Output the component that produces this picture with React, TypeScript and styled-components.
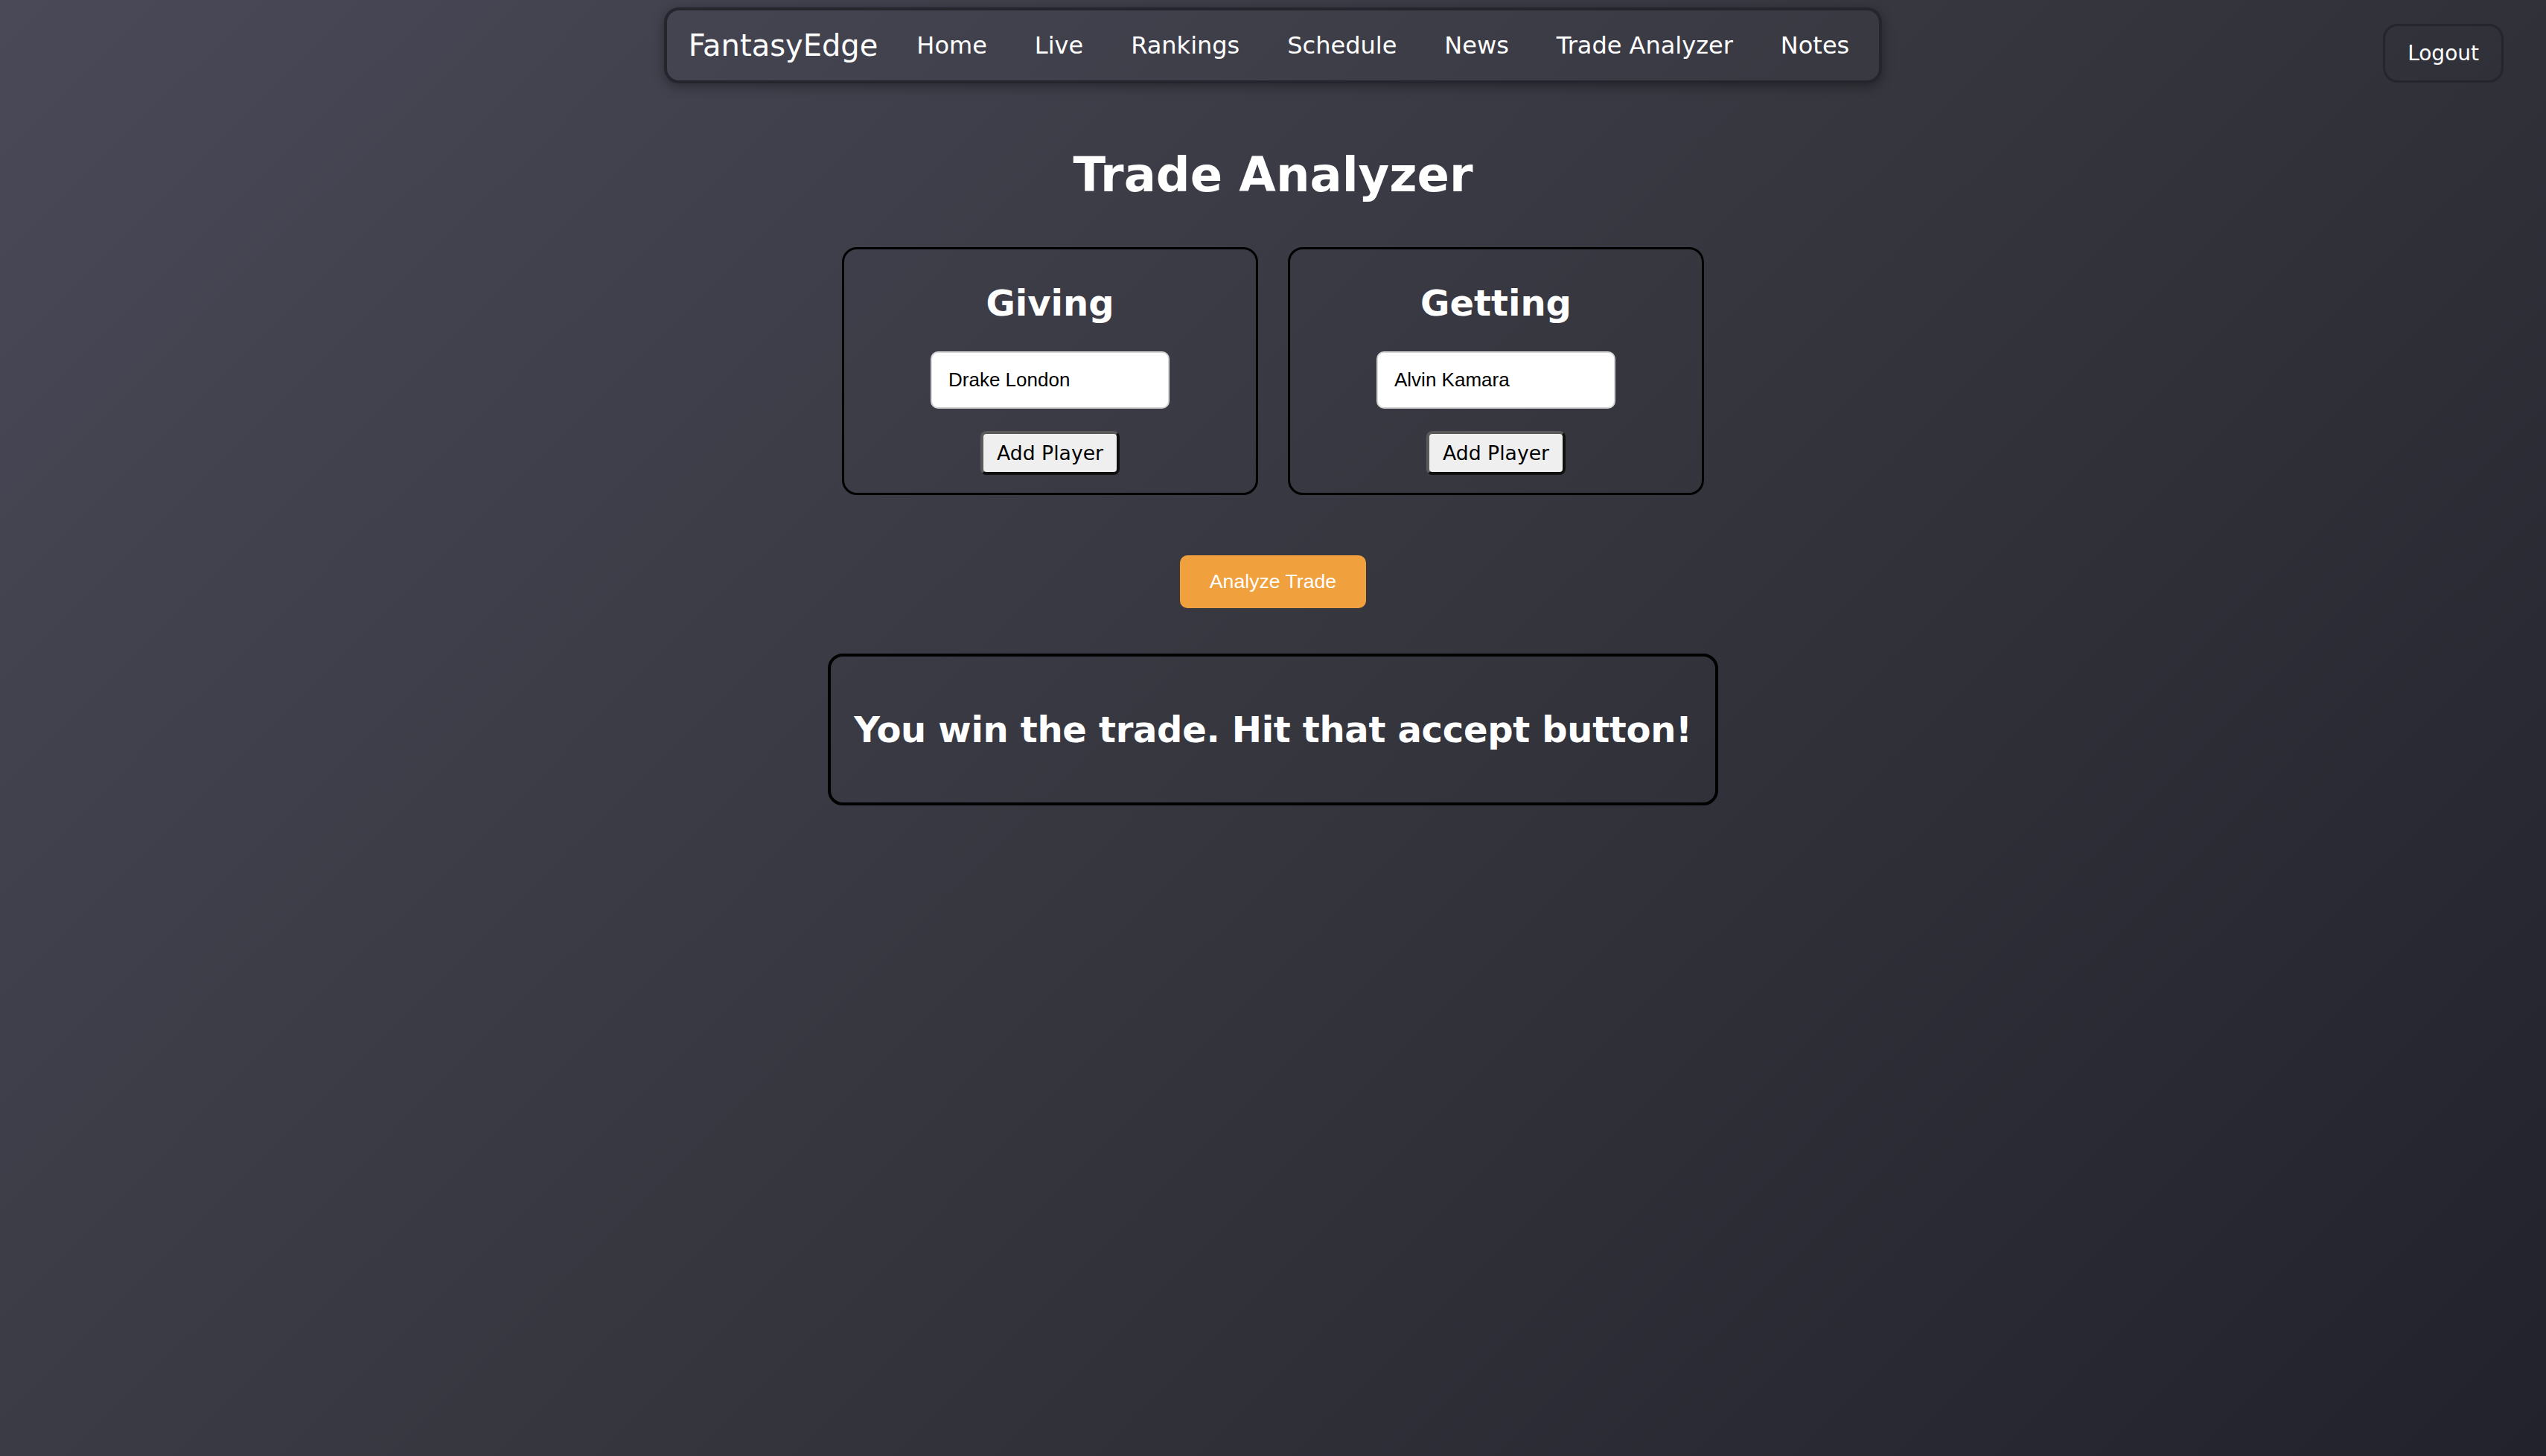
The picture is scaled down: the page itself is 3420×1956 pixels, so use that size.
import React, { useState } from "react";
import styled, { createGlobalStyle } from "styled-components";

const GlobalStyle = createGlobalStyle`
  html, body {
    margin: 0;
    padding: 0;
    min-height: 100%;
  }
  body {
    font-family: Verdana, "DejaVu Sans", sans-serif;
    color: #ffffff;
    background: linear-gradient(135deg, #494958 0%, #36363f 50%, #22222c 100%);
    min-height: 100vh;
  }
  * {
    box-sizing: border-box;
  }
`;

const Page = styled.div`
  position: relative;
  min-height: 100vh;
  display: flex;
  flex-direction: column;
  align-items: center;
  padding-top: 10px;
`;

const NavBar = styled.nav`
  display: flex;
  align-items: center;
  height: 102px;
  padding: 0 40px 0 29px;
  border: 4px solid #25252e;
  border-radius: 20px;
  box-shadow: 0 4px 16px rgba(0, 0, 0, 0.35);
  background: rgba(255, 255, 255, 0.01);
`;

const Logo = styled.span`
  font-size: 40px;
  color: #ffffff;
  margin-right: 52px;
`;

const NavLinks = styled.div`
  display: flex;
  align-items: center;
  gap: 64px;
`;

const NavLink = styled.a`
  font-size: 32px;
  color: #ffffff;
  text-decoration: none;
  cursor: pointer;
`;

const LogoutButton = styled.button`
  position: absolute;
  top: 32px;
  right: 57px;
  padding: 20px 30px;
  font-family: Verdana, "DejaVu Sans", sans-serif;
  font-size: 28px;
  color: #ffffff;
  background: transparent;
  border: 3px solid #25252e;
  border-radius: 20px;
  cursor: pointer;
`;

const Title = styled.h1`
  margin: 86px 0 60px;
  font-size: 64px;
  font-weight: bold;
  line-height: normal;
`;

const SideRow = styled.div`
  display: flex;
  gap: 40px;
`;

const SideCard = styled.div`
  width: 559px;
  display: flex;
  flex-direction: column;
  align-items: center;
  padding: 44px 0 24px;
  border: 3px solid #000000;
  border-radius: 20px;
`;

const SideTitle = styled.h2`
  margin: 0 0 37px;
  font-size: 48px;
  font-weight: bold;
  line-height: normal;
`;

const PlayerInput = styled.input`
  width: 321px;
  padding: 21px 22px;
  font-family: Arial, "Liberation Sans", sans-serif;
  font-size: 26px;
  color: #000000;
  background: #ffffff;
  border: 2px solid #d4d4d4;
  border-radius: 10px;
  outline: none;
  margin-bottom: 30px;
`;

const AddButton = styled.button`
  padding: 10px 18px;
  font-family: Verdana, "DejaVu Sans", sans-serif;
  font-size: 26.67px;
  line-height: normal;
  color: #000000;
  background: #efefef;
  border: 4px solid;
  border-color: #5a5a5a #111111 #111111 #5a5a5a;
  border-radius: 8px;
  cursor: pointer;
`;

const AnalyzeButton = styled.button`
  margin-top: 81px;
  padding: 20px 40px;
  font-family: Arial, "Liberation Sans", sans-serif;
  font-size: 26.67px;
  line-height: normal;
  color: #ffffff;
  background: #f0a03c;
  border: none;
  border-radius: 10px;
  cursor: pointer;
`;

const ResultBox = styled.div`
  margin-top: 61px;
  width: 1196px;
  padding: 70px 8px;
  border: 4px solid #000000;
  border-radius: 20px;
  text-align: center;
`;

const ResultText = styled.h2`
  margin: 0;
  font-size: 48px;
  font-weight: bold;
  line-height: 56px;
  white-space: nowrap;
  letter-spacing: -0.3px;
`;

const links = ["Home", "Live", "Rankings", "Schedule", "News", "Trade Analyzer", "Notes"];

export default function App() {
  const [giving, setGiving] = useState("Drake London");
  const [getting, setGetting] = useState("Alvin Kamara");

  return (
    <>
      <GlobalStyle />
      <Page>
        <NavBar>
          <Logo>FantasyEdge</Logo>
          <NavLinks>
            {links.map((l) => (
              <NavLink key={l}>{l}</NavLink>
            ))}
          </NavLinks>
        </NavBar>
        <LogoutButton>Logout</LogoutButton>

        <Title>Trade Analyzer</Title>

        <SideRow>
          <SideCard>
            <SideTitle>Giving</SideTitle>
            <PlayerInput value={giving} onChange={(e) => setGiving(e.target.value)} />
            <AddButton>Add Player</AddButton>
          </SideCard>
          <SideCard>
            <SideTitle>Getting</SideTitle>
            <PlayerInput value={getting} onChange={(e) => setGetting(e.target.value)} />
            <AddButton>Add Player</AddButton>
          </SideCard>
        </SideRow>

        <AnalyzeButton>Analyze Trade</AnalyzeButton>

        <ResultBox>
          <ResultText>You win the trade. Hit that accept button!</ResultText>
        </ResultBox>
      </Page>
    </>
  );
}
